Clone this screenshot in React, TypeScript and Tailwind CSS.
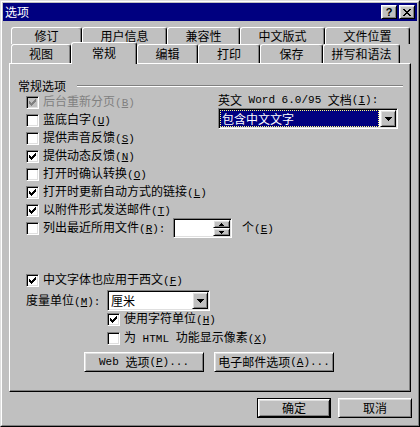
import React from "react";

const CHECK: number[][] = [
  [6, 0], [5, 1], [6, 1], [0, 2], [4, 2], [5, 2], [6, 2], [0, 3], [1, 3], [3, 3], [4, 3], [5, 3],
  [0, 4], [1, 4], [2, 4], [3, 4], [4, 4], [1, 5], [2, 5], [3, 5], [2, 6],
];

const CLOSE: number[][] = [
  [0, 0], [1, 0], [6, 0], [7, 0], [1, 1], [2, 1], [5, 1], [6, 1], [2, 2], [3, 2], [4, 2], [5, 2],
  [3, 3], [4, 3], [2, 4], [3, 4], [4, 4], [5, 4], [1, 5], [2, 5], [5, 5], [6, 5], [0, 6], [1, 6], [6, 6], [7, 6],
];

const raised =
  "border border-t-white border-l-white border-b-black border-r-black shadow-[inset_1px_1px_0_#dfdfdf,inset_-1px_-1px_0_#808080]";
const sunken =
  "border border-t-[#808080] border-l-[#808080] border-b-white border-r-white shadow-[inset_1px_1px_0_#000,inset_-1px_-1px_0_#dfdfdf]";

function Pix({ pts, w, h, color }: { pts: number[][]; w: number; h: number; color: string }) {
  return (
    <svg width={w} height={h} viewBox={`0 0 ${w} ${h}`} shapeRendering="crispEdges">
      {pts.map(([x, y]) => (
        <rect key={`${x}-${y}`} x={x} y={y} width="1" height="1" fill={color} />
      ))}
    </svg>
  );
}

function Arrow() {
  return (
    <svg width="7" height="4" viewBox="0 0 7 4" shapeRendering="crispEdges">
      <rect x="0" y="0" width="7" height="1" fill="#000" />
      <rect x="1" y="1" width="5" height="1" fill="#000" />
      <rect x="2" y="2" width="3" height="1" fill="#000" />
      <rect x="3" y="3" width="1" height="1" fill="#000" />
    </svg>
  );
}

function SmallArrow({ up }: { up?: boolean }) {
  return (
    <svg width="5" height="3" viewBox="0 0 5 3" shapeRendering="crispEdges">
      {up ? (
        <>
          <rect x="2" y="0" width="1" height="1" fill="#000" />
          <rect x="1" y="1" width="3" height="1" fill="#000" />
          <rect x="0" y="2" width="5" height="1" fill="#000" />
        </>
      ) : (
        <>
          <rect x="0" y="0" width="5" height="1" fill="#000" />
          <rect x="1" y="1" width="3" height="1" fill="#000" />
          <rect x="2" y="2" width="1" height="1" fill="#000" />
        </>
      )}
    </svg>
  );
}

function L({ children }: { children: React.ReactNode }) {
  return <span className="font-['Liberation_Mono',monospace] text-[11px] whitespace-pre">{children}</span>;
}

function M({ c }: { c: string }) {
  return (
    <L>
      (<span className="underline underline-offset-[1px]">{c}</span>)
    </L>
  );
}

function Box({ checked, disabled }: { checked?: boolean; disabled?: boolean }) {
  return (
    <div
      className={`w-[13px] h-[13px] shrink-0 flex items-center justify-center ${sunken} ${
        disabled ? "bg-[#c0c0c0]" : "bg-white"
      }`}
    >
      {checked && <Pix pts={CHECK} w={7} h={7} color={disabled ? "#808080" : "#000"} />}
    </div>
  );
}

function CB({
  checked,
  disabled,
  children,
  className = "h-[18px]",
}: {
  checked?: boolean;
  disabled?: boolean;
  children: React.ReactNode;
  className?: string;
}) {
  return (
    <div className={`flex items-center gap-[4px] ${className}`}>
      <Box checked={checked} disabled={disabled} />
      <span className={`shrink-0 whitespace-nowrap ${disabled ? "text-[#808080]" : "text-black"}`}>{children}</span>
    </div>
  );
}

const backTabs = [
  { t: "修订", w: "w-[71px]" },
  { t: "用户信息", w: "w-[85px]" },
  { t: "兼容性", w: "w-[73px]" },
  { t: "中文版式", w: "w-[85px]" },
  { t: "文件位置", w: "w-[85px]" },
];

const frontTabs = [
  { t: "视图", w: "w-[60px]", active: false },
  { t: "常规", w: "w-[66px]", active: true },
  { t: "编辑", w: "w-[61px]", active: false },
  { t: "打印", w: "w-[62px]", active: false },
  { t: "保存", w: "w-[63px]", active: false },
  { t: "拼写和语法", w: "w-[77px]", active: false },
];

const tabBase =
  "flex items-center justify-center shrink-0 bg-[#c0c0c0] border-t border-l border-r border-t-white border-l-white border-r-black shadow-[inset_-1px_0_0_#808080] rounded-t-[3px]";

export default function App() {
  return (
    <div className="w-[420px] h-[427px] bg-[#c0c0c0] border border-t-[#dfdfdf] border-l-[#dfdfdf] border-b-black border-r-black font-['Noto_Sans_CJK_SC','Noto_Sans',sans-serif] text-[12px] leading-[14px] text-black select-none">
      <div className="h-full border border-t-white border-l-white border-b-[#808080] border-r-[#808080] p-[1px] flex flex-col">
        {/* Title bar */}
        <div className="h-[18px] shrink-0 bg-[#000080] flex items-center pl-[2px] pr-[2px]">
          <span className="text-white">选项</span>
          <div className="ml-auto flex gap-[2px]">
            <div className={`w-[16px] h-[14px] bg-[#c0c0c0] flex items-center justify-center ${raised}`}>
              <span className="font-['Liberation_Sans',sans-serif] font-bold text-[11px] leading-[11px]">?</span>
            </div>
            <div className={`w-[16px] h-[14px] bg-[#c0c0c0] flex items-center justify-center ${raised}`}>
              <Pix pts={CLOSE} w={8} h={7} color="#000" />
            </div>
          </div>
        </div>

        {/* Tabs */}
        <div className="mt-[6px] ml-[6px] pl-[2px] flex flex-col shrink-0">
          <div className="flex h-[17px]">
            {backTabs.map((b) => (
              <div key={b.t} className={`${tabBase} ${b.w} h-[17px]`}>
                {b.t}
              </div>
            ))}
          </div>
          <div className="flex items-end h-[19px]">
            {frontTabs.map((f) =>
              f.active ? (
                <div key={f.t} className={`${tabBase} ${f.w} h-[22px] -mb-px relative z-10 pb-[1px]`}>
                  {f.t}
                </div>
              ) : (
                <div key={f.t} className={`${tabBase} ${f.w} h-[19px]`}>
                  {f.t}
                </div>
              )
            )}
          </div>
        </div>

        {/* Panel */}
        <div className="ml-[6px] w-[402px] h-[329px] shrink-0 border-t border-l border-t-white border-l-white border-r border-b border-r-black border-b-black shadow-[inset_-1px_-1px_0_#808080] flex flex-col">
          <div className="flex items-center h-[14px] mt-[15px] pl-[8px] pr-[7px]">
            <span className="whitespace-nowrap">常规选项</span>
            <div className="flex-1 ml-[11px] h-[2px] border-t border-t-[#808080] border-b border-b-white" />
          </div>

          <div className="grid grid-cols-[192px_1fr] pl-[16px]">
            <div className="flex flex-col">
              <CB checked disabled>
                后台重新分页<M c="B" />
              </CB>
              <CB>
                蓝底白字<M c="U" />
              </CB>
              <CB>
                提供声音反馈<M c="S" />
              </CB>
              <CB checked>
                提供动态反馈<M c="N" />
              </CB>
              <CB>
                打开时确认转换<M c="O" />
              </CB>
              <CB checked>
                打开时更新自动方式的链接<M c="L" />
              </CB>
              <CB checked>
                以附件形式发送邮件<M c="T" />
              </CB>
              <div className="flex items-center h-[18px] gap-[4px]">
                <Box />
                <span className="w-[126px] shrink-0 whitespace-nowrap">
                  列出最近所用文件<M c="R" />
                  <L>:</L>
                </span>
                <div className={`w-[59px] h-[20px] shrink-0 bg-white flex justify-end p-[1px] ${sunken}`}>
                  <div className="w-[17px] flex flex-col">
                    <div className={`flex-1 bg-[#c0c0c0] flex items-center justify-center ${raised}`}>
                      <SmallArrow up />
                    </div>
                    <div className={`flex-1 bg-[#c0c0c0] flex items-center justify-center ${raised}`}>
                      <SmallArrow />
                    </div>
                  </div>
                </div>
                <span className="ml-[6px] shrink-0 whitespace-nowrap">
                  个<M c="E" />
                </span>
              </div>
            </div>

            <div className="flex flex-col">
              <div className="h-[14px] flex items-center whitespace-nowrap">
                英文<L> Word 6.0/95 </L>文档<M c="I" />
                <L>:</L>
              </div>
              <div className={`mt-[1px] w-[180px] h-[21px] bg-white flex p-[1px] ${sunken}`}>
                <div className="flex-1 flex items-center pr-[1px]">
                  <div className="h-full w-full bg-[#000080] text-white flex items-center pl-[1px] border border-dotted border-[#ffff80]">
                    包含中文文字
                  </div>
                </div>
                <div className={`w-[16px] h-full bg-[#c0c0c0] flex items-center justify-center ${raised}`}>
                  <Arrow />
                </div>
              </div>
            </div>
          </div>

          <div className="pl-[16px] flex flex-col">
            <CB checked className="h-[18px] mt-[34px]">
              中文字体也应用于西文<M c="F" />
            </CB>
            <div className="flex items-center h-[21px] mt-[1px]">
              <span className="w-[81px] shrink-0 whitespace-nowrap">
                度量单位<M c="M" />
                <L>:</L>
              </span>
              <div className={`w-[103px] h-[21px] shrink-0 bg-white flex p-[1px] ${sunken}`}>
                <div className="flex-1 flex items-center pl-[2px]">厘米</div>
                <div className={`w-[16px] h-full bg-[#c0c0c0] flex items-center justify-center ${raised}`}>
                  <Arrow />
                </div>
              </div>
            </div>
            <div className="pl-[81px] flex flex-col">
              <CB checked className="h-[16px]">
                使用字符单位<M c="H" />
              </CB>
              <CB className="h-[16px] mt-[3px]">
                为<L> HTML </L>功能显示像素<M c="X" />
              </CB>
            </div>
            <div className="flex gap-[10px] pl-[58px] mt-[6px]">
              <div className={`w-[120px] h-[20px] shrink-0 flex items-center justify-center whitespace-nowrap ${raised}`}>
                <L>Web </L>选项<M c="P" />
                <L>...</L>
              </div>
              <div className={`w-[120px] h-[20px] shrink-0 flex items-center justify-center whitespace-nowrap ${raised}`}>
                电子邮件选项<M c="A" />
                <L>...</L>
              </div>
            </div>
          </div>
        </div>

        {/* Bottom buttons */}
        <div className="mt-[6px] flex justify-end gap-[7px] pr-[5px]">
          <div className="w-[74px] h-[20px] border border-black">
            <div className={`w-full h-full flex items-center justify-center ${raised}`}>确定</div>
          </div>
          <div className={`w-[74px] h-[20px] flex items-center justify-center ${raised}`}>取消</div>
        </div>
      </div>
    </div>
  );
}
